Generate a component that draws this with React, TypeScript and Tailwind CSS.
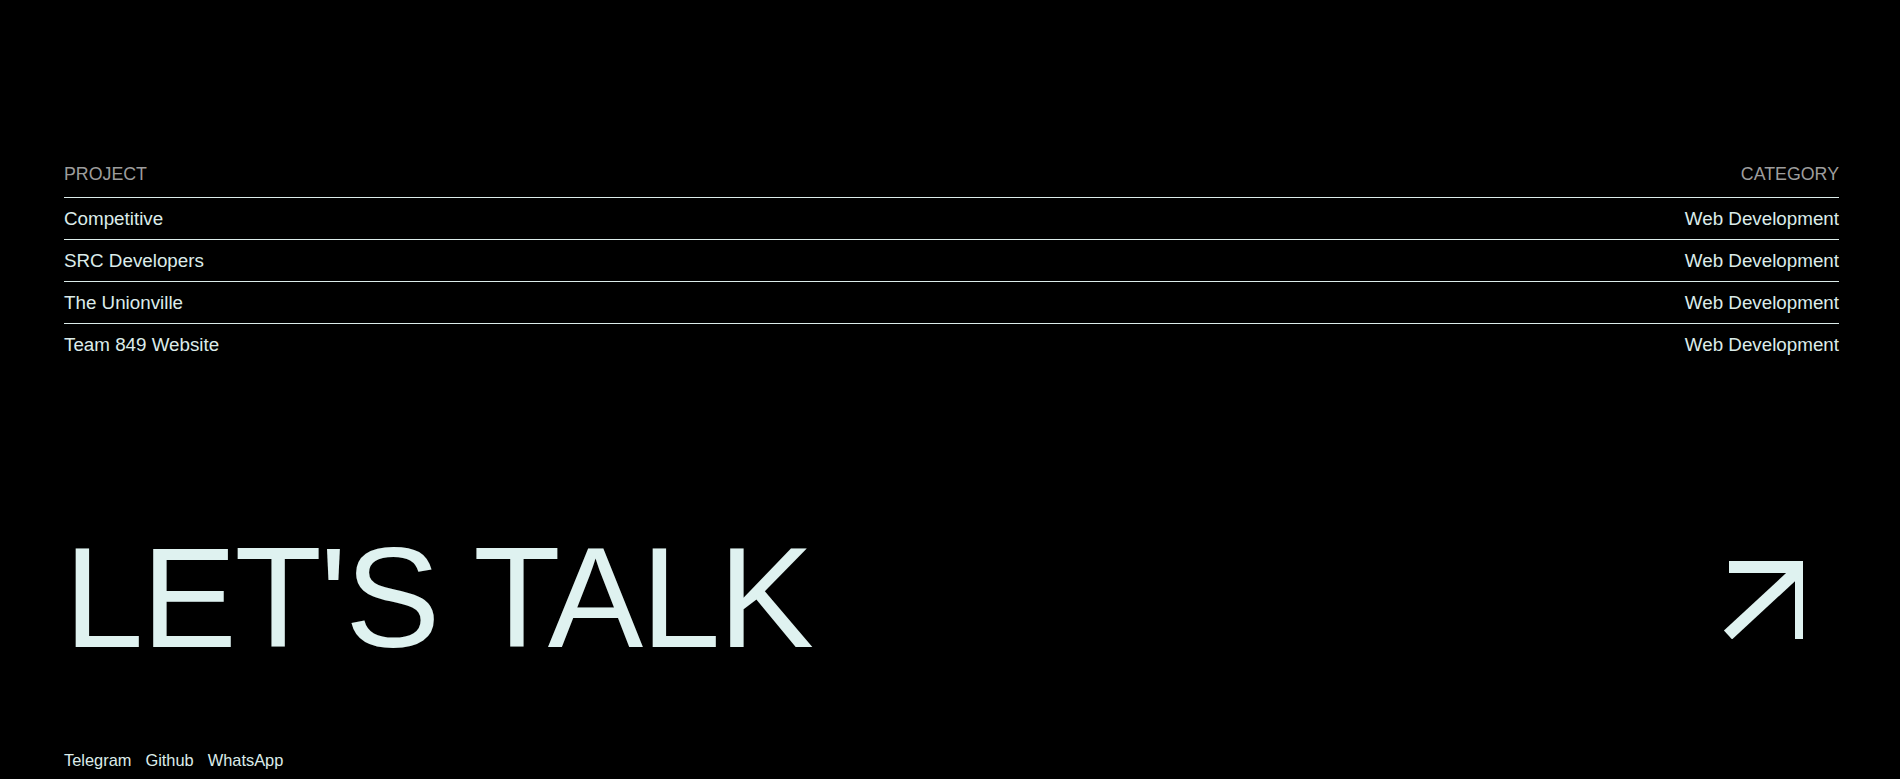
import React from "react";

const rows = [
  { name: "Competitive", cat: "Web Development" },
  { name: "SRC Developers", cat: "Web Development" },
  { name: "The Unionville", cat: "Web Development" },
  { name: "Team 849 Website", cat: "Web Development" },
];

export default function App() {
  return (
    <div
      className="min-h-[779px] w-full bg-black text-[#dcecea]"
      style={{ fontFamily: '"Liberation Sans", Arial, sans-serif' }}
    >
      <div className="pl-16 pr-[61px] pt-[156px] pb-[6px]">
        <div className="flex h-[41px] items-center justify-between pb-1 text-[17.8px] text-[#9d9d9d]">
          <span>PROJECT</span>
          <span>CATEGORY</span>
        </div>
        <div className="flex flex-col">
          {rows.map((r) => (
            <div
              key={r.name}
              className="flex h-[42px] items-center justify-between border-t border-[#dcecea] pt-[2px] text-[18.8px]"
            >
              <span>{r.name}</span>
              <span>{r.cat}</span>
            </div>
          ))}
        </div>

        <div className="mt-[161px] flex items-center justify-between">
          <h2 className="text-[143px] leading-[143px] tracking-[-0.015em] text-[#dff2f0]">
            LET'S TALK
          </h2>
          <svg
            width="80"
            height="78"
            viewBox="0 0 80 78"
            className="mr-[36px] mt-[4px]"
            fill="none"
          >
            <path d="M6 0 H78 V72" stroke="#dff2f0" strokeWidth="12" fill="none" transform="translate(0 6)" />
            <path d="M72 12 L5 74" stroke="#dff2f0" strokeWidth="12" />
          </svg>
        </div>

        <div className="mt-[79px] flex h-[24px] items-center gap-[14px] text-[16.4px] text-[#dcecea]">
          <span>Telegram</span>
          <span>Github</span>
          <span>WhatsApp</span>
        </div>
      </div>
    </div>
  );
}
